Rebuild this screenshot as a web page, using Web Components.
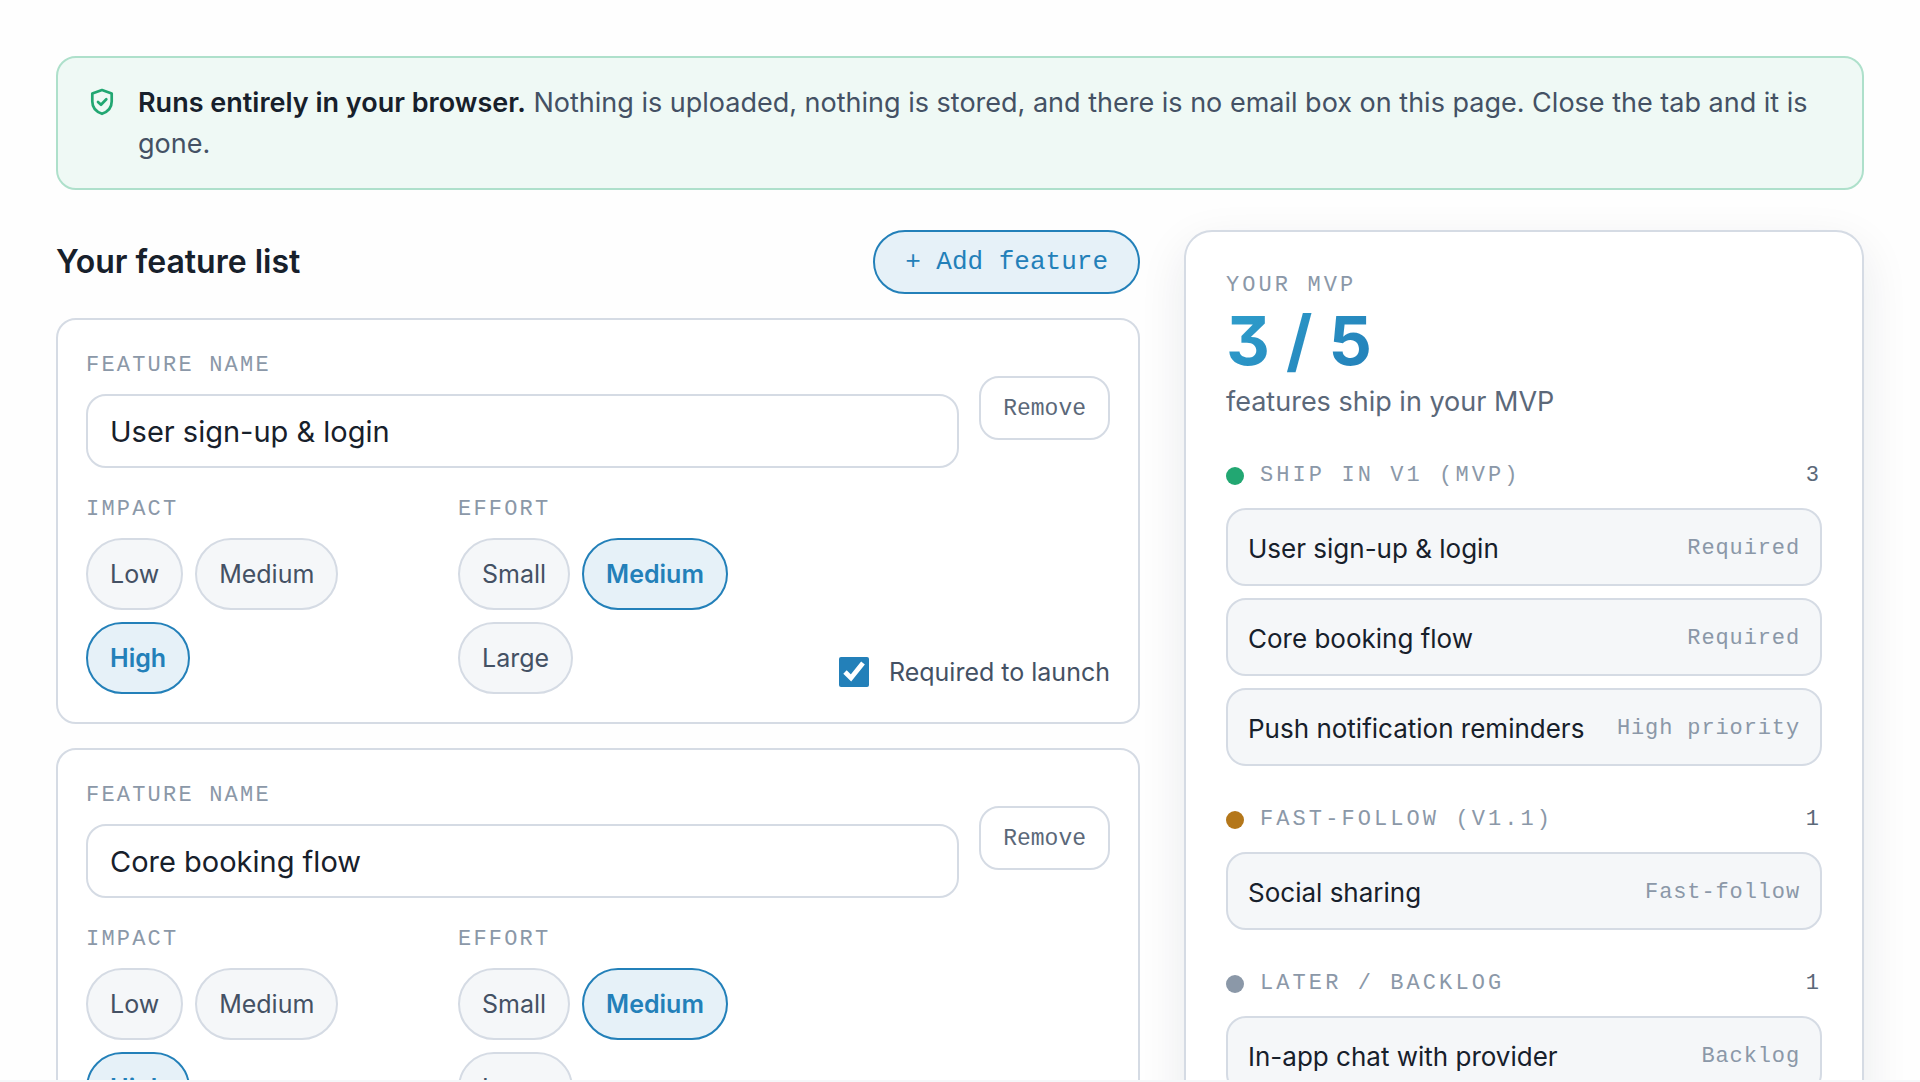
<!DOCTYPE html>
<html lang="en">
<head>
<meta charset="utf-8">
<title>MVP feature planner</title>
<style>
:root{--ink:#17202b;--text:#445164;--muted:#5b6879;--faint:#8b98a8;--line:#d5dbe4;--soft:#f5f7f9;--blue:#2380b9;--blue-soft:#e6f1f8;--green:#22a772;--mono:"Liberation Mono",monospace}
html,body{height:100%}
body{margin:0;background:#fefefe;color:var(--ink);font-family:Inter,"Liberation Sans",sans-serif;font-size:27px;line-height:41px;overflow:hidden;box-sizing:border-box;border-bottom:2px solid var(--soft)}
</style>
</head>
<body>
<mvp-planner></mvp-planner>
<script>
const base = '*{box-sizing:border-box}';
class Base extends HTMLElement {
  connectedCallback() {
    if (this.shadowRoot) return;
    this.attachShadow({mode: 'open'}).innerHTML = '<style>' + base + this.css() + '</style>' + this.html();
    this.ready();
  }
  ready() {}
}

customElements.define('privacy-note', class extends Base {
  css() { return `
    :host{display:flex;gap:20px;align-items:flex-start;padding:24px 28px;border:2px solid #aee0cb;border-radius:20px;background:#eff9f5;color:var(--text)}
    svg{flex:none;width:32px;height:41px;color:var(--green)}
    ::slotted(strong){color:var(--ink);font-weight:600}`; }
  html() { return `<svg viewBox="0 0 32 41" fill="none" stroke="currentColor" stroke-width="2.7" stroke-linecap="round" stroke-linejoin="round" aria-hidden="true"><path d="M16 8 L25.700 11.600 V19.500 C25.700 25.700 21.600 29.800 16 31.800 C10.400 29.800 6.300 25.700 6.300 19.500 V11.600 Z"/><path d="M12 20 L15 22.800 L20.300 17.300"/></svg><div><slot></slot></div>`; }
});

customElements.define('choice-pills', class extends Base {
  css() { return `
    :host{display:block}
    .label{font:22px/36px var(--mono);letter-spacing:.1em;text-transform:uppercase;color:var(--faint);margin-bottom:10px}
    .row{display:flex;flex-wrap:wrap;gap:12px}
    button{height:72px;padding:0 22px;border:2px solid var(--line);border-radius:36px;background:var(--soft);color:var(--text);font:25px/40px Inter,sans-serif;cursor:pointer}
    button[aria-pressed=true]{border-color:var(--blue);background:var(--blue-soft);color:var(--blue);font-weight:600}`; }
  html() {
    const on = this.getAttribute('value');
    return `<div class="label" id="l">${this.getAttribute('label')}</div><div class="row" role="group" aria-labelledby="l">` +
      this.getAttribute('options').split(',').map(o => `<button type="button" aria-pressed="${o === on}">${o}</button>`).join('') + '</div>';
  }
  ready() {
    const all = [...this.shadowRoot.querySelectorAll('button')];
    all.forEach(b => b.onclick = () => all.forEach(x => x.setAttribute('aria-pressed', x === b)));
  }
});

customElements.define('feature-card', class extends Base {
  css() { return `
    :host{display:block;padding:28px;border:2px solid var(--line);border-radius:20px;background:#fff}
    .head{display:flex;align-items:center;gap:20px;margin-bottom:24px}
    .name{flex:1}
    .name label{display:block;font:22px/36px var(--mono);letter-spacing:.1em;text-transform:uppercase;color:var(--faint);margin-bottom:10px}
    input[type=text]{display:block;width:100%;height:74px;padding:0 22px;border:2px solid var(--line);border-radius:20px;background:#fff;color:var(--ink);font:29px/44px Inter,sans-serif}
    .remove{height:64px;padding:2px 22px 0;border:2px solid var(--line);border-radius:20px;background:#fff;color:var(--muted);font:23px/36px var(--mono);cursor:pointer}
    .opts{display:grid;grid-template-columns:1fr 1fr 280px;column-gap:28px;align-items:end}
    .req{display:flex;align-items:center;justify-content:flex-end;gap:20px;height:44px;font-size:25px;line-height:40px;color:var(--text);white-space:nowrap}
    .req input{width:30px;height:30px;margin:0;accent-color:var(--blue)}`; }
  html() {
    return `<div class="head"><div class="name"><label for="n">Feature name</label><input type="text" id="n" value="${this.getAttribute('name').replace('&', '&amp;')}"></div><button class="remove" type="button">Remove</button></div>
    <div class="opts"><choice-pills label="Impact" options="Low,Medium,High" value="${this.getAttribute('impact')}"></choice-pills>
    <choice-pills label="Effort" options="Small,Medium,Large" value="${this.getAttribute('effort')}"></choice-pills>
    <label class="req"><input type="checkbox" ${this.hasAttribute('required') ? 'checked' : ''}>Required to launch</label></div>`;
  }
  ready() { this.shadowRoot.querySelector('.remove').onclick = () => this.remove(); }
});

customElements.define('bucket-item', class extends Base {
  css() { return `
    :host{display:flex;box-sizing:border-box;align-items:center;justify-content:space-between;gap:20px;height:78px;padding:3px 20px 0;border:2px solid var(--line);border-radius:20px;background:var(--soft);color:var(--ink);font-size:26px;line-height:40px}
    .tag{font:22px/34px var(--mono);letter-spacing:.04em;color:var(--faint);white-space:nowrap}`; }
  html() { return `<span><slot></slot></span><span class="tag">${this.getAttribute('tag')}</span>`; }
});

customElements.define('mvp-bucket', class extends Base {
  css() { return `
    :host{display:block;margin-top:36px}
    .head{display:flex;align-items:center;gap:16px;font:22px/36px var(--mono);letter-spacing:.14em;text-transform:uppercase;color:var(--faint);margin-bottom:14px}
    .dot{width:18px;height:18px;border-radius:50%;background:var(--dot)}
    .count{margin-left:auto;color:var(--muted)}
    .list{display:flex;flex-direction:column;gap:12px}`; }
  html() { return `<div class="head"><span class="dot"></span><span>${this.getAttribute('label')}</span><span class="count">${this.children.length}</span></div><div class="list"><slot></slot></div>`; }
});

customElements.define('mvp-summary', class extends Base {
  css() { return `
    :host{display:block;padding:36px 40px;border:2px solid var(--line);border-radius:28px;background:#fff;box-shadow:0 16px 48px rgba(20,30,50,.09)}
    .label{font:22px/36px var(--mono);letter-spacing:.14em;text-transform:uppercase;color:var(--faint)}
    .num{width:fit-content;margin-bottom:6px;font-size:68px;line-height:72px;font-weight:700;font-feature-settings:"cv09";background:linear-gradient(135deg,#2f9fcc,#2380b9);-webkit-background-clip:text;background-clip:text;color:transparent}
    .sub{color:var(--muted);line-height:40px}`; }
  html() { return `<div class="label">Your MVP</div><div class="num">3 / 5</div><div class="sub">features ship in your MVP</div><slot></slot>`; }
});

customElements.define('mvp-planner', class extends Base {
  css() { return `
    :host{display:block;padding:56px}
    .cols{display:grid;grid-template-columns:1084fr 680fr;gap:44px;align-items:start;margin-top:40px}
    .left{display:flex;flex-direction:column;gap:24px}
    .bar{display:flex;align-items:center;justify-content:space-between}
    h2{margin:0;font-size:32px;line-height:44px;font-weight:600}
    .add{height:64px;padding:0 30px;border:2px solid var(--blue);border-radius:32px;background:var(--blue-soft);color:var(--blue);font:26px/40px var(--mono);cursor:pointer}`; }
  html() { return `
    <privacy-note><strong>Runs entirely in your browser.</strong> Nothing is uploaded, nothing is stored, and there is no email box on this page. Close the tab and it is gone.</privacy-note>
    <div class="cols">
      <section class="left">
        <div class="bar"><h2>Your feature list</h2><button class="add" type="button">+ Add feature</button></div>
        <feature-card name="User sign-up & login" impact="High" effort="Medium" required></feature-card>
        <feature-card name="Core booking flow" impact="High" effort="Medium" required></feature-card>
      </section>
      <mvp-summary>
        <mvp-bucket label="Ship in v1 (MVP)" style="--dot:#22a772">
          <bucket-item tag="Required">User sign-up &amp; login</bucket-item>
          <bucket-item tag="Required">Core booking flow</bucket-item>
          <bucket-item tag="High priority">Push notification reminders</bucket-item>
        </mvp-bucket>
        <mvp-bucket label="Fast-follow (v1.1)" style="--dot:#b4771a"><bucket-item tag="Fast-follow">Social sharing</bucket-item></mvp-bucket>
        <mvp-bucket label="Later / backlog" style="--dot:#8b98a8"><bucket-item tag="Backlog">In-app chat with provider</bucket-item></mvp-bucket>
      </mvp-summary>
    </div>`; }
});
</script>
</body>
</html>
